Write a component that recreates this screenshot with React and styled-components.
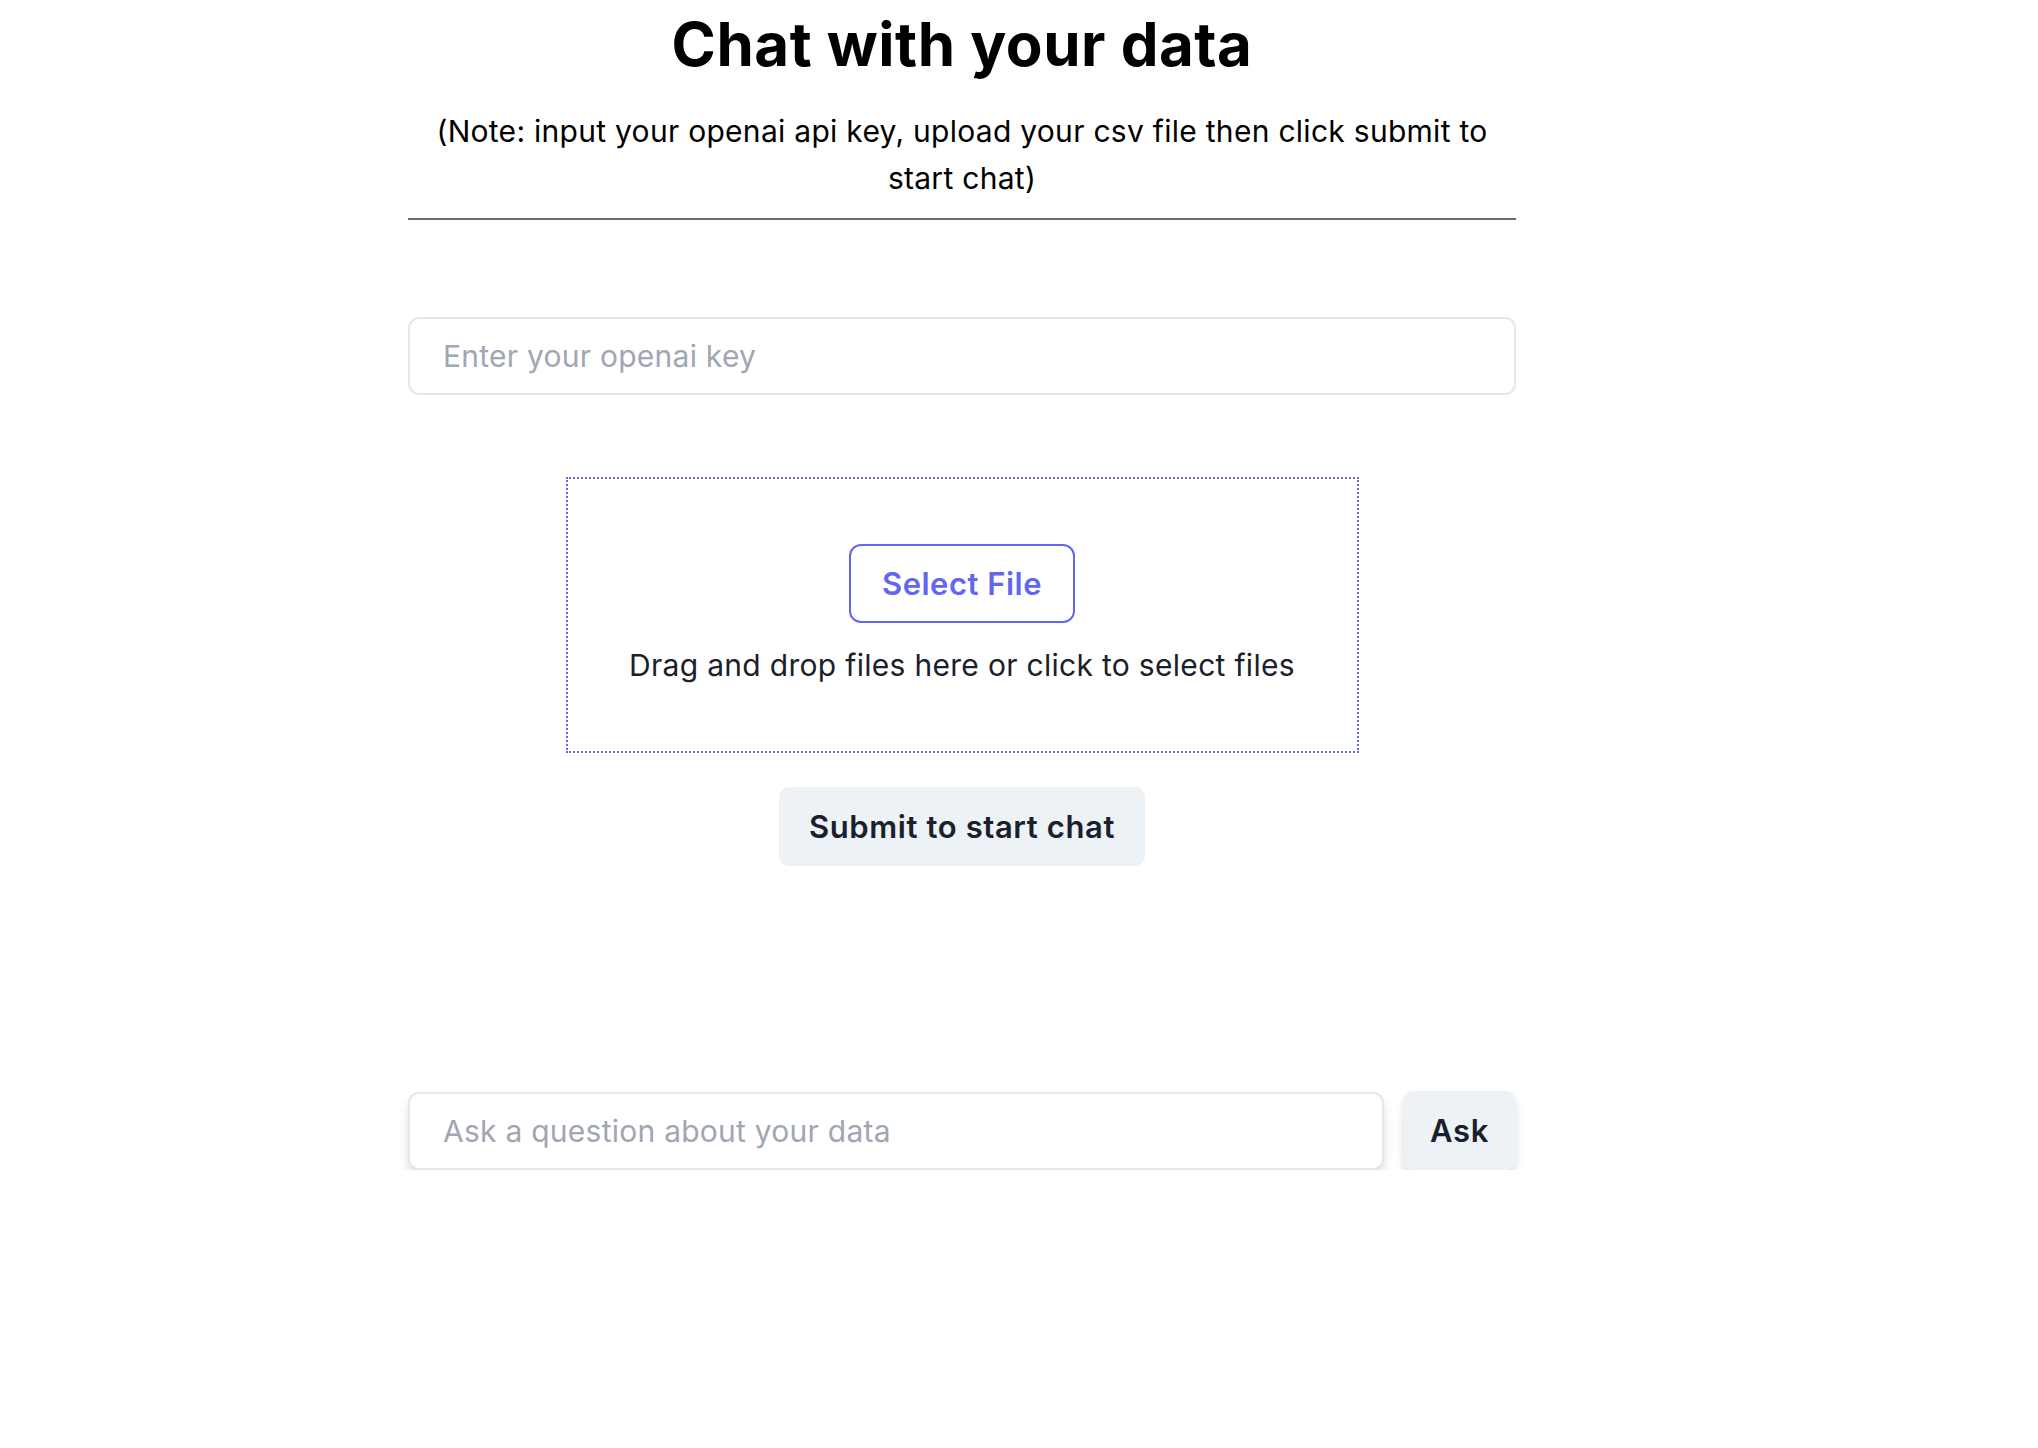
import React from "react";
import styled, { createGlobalStyle } from "styled-components";

const Global = createGlobalStyle`
  html, body { margin: 0; padding: 0; background: #ffffff; }
  body { font-family: "Inter", "Noto Sans", "Liberation Sans", sans-serif; color: #1a202c; }
  * { box-sizing: border-box; }
`;

const raisedShadow =
  "0 8px 14px -3px rgba(0,0,0,0.14), 0 3px 8px -2px rgba(0,0,0,0.08)";

const Page = styled.main`
  width: 1108px;
  margin-left: 408px;
  display: flex;
  flex-direction: column;
  align-items: center;
`;

const Title = styled.h1`
  margin: 9px 0 0;
  font-size: 60px;
  line-height: 70px;
  font-weight: 700;
  color: #000000;
  letter-spacing: 0.5px;
  text-align: center;
`;

const Note = styled.p`
  margin: 29px 0 0;
  font-size: 30px;
  line-height: 47px;
  font-weight: 400;
  color: #000000;
  text-align: center;
  width: 100%;
  padding: 0 20px;
  letter-spacing: 0.28px;
`;

const Rule = styled.hr`
  width: 100%;
  margin: 16px 0 0;
  border: none;
  border-top: 2px solid #6b6b6b;
`;

const TextInput = styled.input`
  width: 100%;
  height: 78px;
  margin-top: ${(p) => p.$top}px;
  padding: 0 33px;
  border: 2px solid #e2e8f0;
  border-radius: 11px;
  font-family: inherit;
  font-size: 30px;
  letter-spacing: 0.25px;
  color: #1a202c;
  background: #ffffff;
  outline: none;
  box-shadow: ${(p) => (p.$raised ? raisedShadow : "none")};
  &::placeholder { color: #a0a6b3; }
`;

const DropZone = styled.div`
  width: 793px;
  height: 276px;
  margin-top: 82px;
  border: 2px dotted #6366f1;
  display: flex;
  flex-direction: column;
  align-items: center;
  justify-content: center;
  gap: 20px;
  cursor: pointer;
`;

const SelectButton = styled.button`
  height: 79px;
  padding: 0 31px;
  border: 2px solid #6366f1;
  border-radius: 12px;
  background: #ffffff;
  color: #6366f1;
  font-family: inherit;
  font-size: 31px;
  font-weight: 600;
  letter-spacing: 0.5px;
  cursor: pointer;
`;

const DropText = styled.p`
  margin: 0;
  font-size: 30px;
  line-height: 44px;
  color: #1a202c;
  letter-spacing: 0.3px;
`;

const GrayButton = styled.button`
  height: 79px;
  padding: 0 ${(p) => p.$padX}px;
  margin-top: ${(p) => p.$top || 0}px;
  width: ${(p) => (p.$width ? `${p.$width}px` : "auto")};
  flex-shrink: 0;
  border: none;
  border-radius: 10px;
  background: #edf2f7;
  color: #1a202c;
  font-family: inherit;
  font-size: 31px;
  font-weight: 600;
  letter-spacing: 0.6px;
  cursor: pointer;
  box-shadow: ${(p) => (p.$raised ? raisedShadow : "none")};
`;

const AskRow = styled.div`
  width: 100%;
  margin-top: 225px;
  display: flex;
  align-items: center;
  gap: 19px;
`;

export default function App() {
  return (
    <>
      <Global />
      <Page>
        <Title>Chat with your data</Title>
        <Note>
          (Note: input your openai api key, upload your csv file then click submit to start chat)
        </Note>
        <Rule />
        <TextInput $top={97} placeholder="Enter your openai key" />
        <DropZone>
          <SelectButton>Select File</SelectButton>
          <DropText>Drag and drop files here or click to select files</DropText>
        </DropZone>
        <GrayButton $padX={30} $top={34}>Submit to start chat</GrayButton>
        <AskRow>
          <TextInput $top={0} $raised placeholder="Ask a question about your data" />
          <GrayButton $padX={0} $width={113} $raised>Ask</GrayButton>
        </AskRow>
      </Page>
    </>
  );
}
